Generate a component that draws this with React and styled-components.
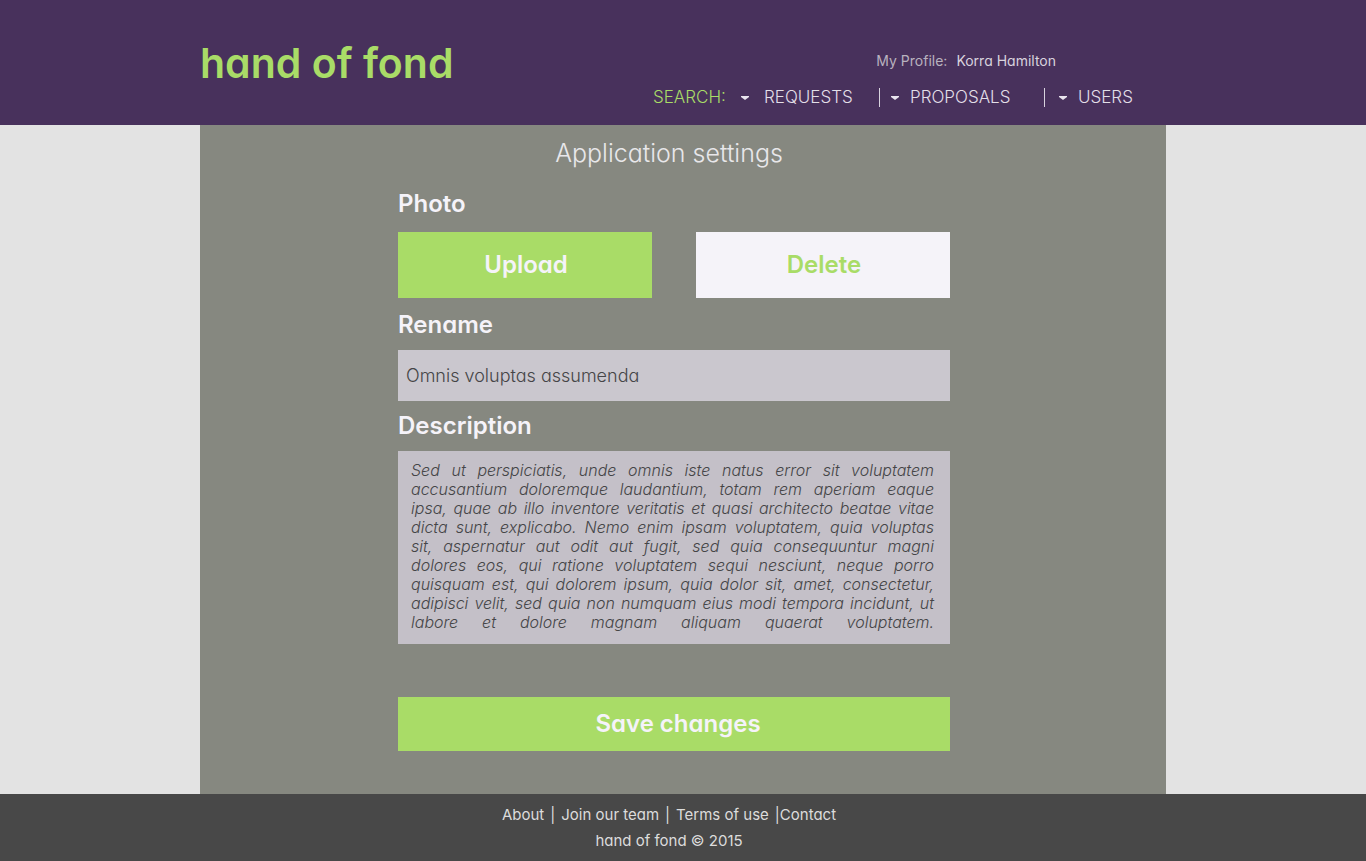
import React from "react";
import styled, { createGlobalStyle } from "styled-components";

const colors = {
  purple: "#48315c",
  green: "#a9dc67",
  panel: "#868880",
  page: "#e3e3e3",
  light: "#f5f3f9",
  ink: "#454547",
  footer: "#484848",
};

const GlobalStyle = createGlobalStyle`
  * { box-sizing: border-box; }
  body {
    margin: 0;
    background: ${colors.page};
    font-family: Inter, "Open Sans", sans-serif;
    font-feature-settings: "cv11" 1;
  }
  button, input, textarea { font: inherit; font-feature-settings: inherit; }
  a { color: inherit; text-decoration: none; }
`;

const Page = styled.div`
  min-height: 100vh;
  display: flex;
  flex-direction: column;
`;

const Header = styled.header`
  background: ${colors.purple};
`;

const HeaderInner = styled.div`
  max-width: 966px;
  min-height: 125px;
  margin: 0 auto;
  padding-right: 33px;
  display: flex;
  justify-content: space-between;
`;

const Logo = styled.a`
  padding-top: 39px;
  color: ${colors.green};
  font-size: 41px;
  line-height: 48px;
  font-weight: 600;
`;

const HeaderSide = styled.div`
  padding-top: 51px;
  display: flex;
  flex-direction: column;
  gap: 17px;
`;

const Profile = styled.div`
  display: flex;
  justify-content: flex-end;
  gap: 9px;
  padding-right: 77px;
  font-size: 14px;
  line-height: 20px;
  color: #d8d3de;
`;

const ProfileLabel = styled.span`
  color: #b9b2bf;
`;

const Nav = styled.nav`
  display: grid;
  grid-template-columns: 87px 139px 165px 89px;
  font-size: 17px;
  line-height: 19px;
  font-weight: 300;
  color: #e3dfe8;
`;

const NavTitle = styled.span`
  color: ${colors.green};
`;

const NavButton = styled.button`
  display: flex;
  align-items: center;
  gap: ${(p) => (p.$divided ? 11 : 15)}px;
  padding: 0 0 0 ${(p) => p.$inset}px;
  border: 0;
  border-left: ${(p) => (p.$divided ? "1px solid #d8d3de" : "0")};
  background: none;
  color: inherit;
  line-height: 19px;
  cursor: pointer;
`;

const CaretIcon = styled.svg`
  flex-shrink: 0;
`;

const Caret = () => (
  <CaretIcon width="8" height="4" viewBox="0 0 8 4" aria-hidden="true">
    <path d="M0 0h8v1L4 4 0 1z" fill="#e9e4ee" />
  </CaretIcon>
);

const Panel = styled.main`
  flex: 1;
  width: 100%;
  max-width: 966px;
  margin: 0 auto;
  padding: 13px 18px 43px 0;
  background: ${colors.panel};
`;

const Title = styled.h1`
  margin: 0 0 22px;
  padding-right: 10px;
  text-align: center;
  font-size: 25px;
  line-height: 30px;
  font-weight: 300;
  color: #e8e7ea;
`;

const Form = styled.form`
  max-width: 552px;
  margin: 0 auto;
  display: flex;
  flex-direction: column;
`;

const Group = styled.div`
  display: flex;
  flex-direction: column;
  gap: ${(p) => p.$gap}px;
  margin-bottom: ${(p) => p.$after}px;
`;

const Heading = styled.label`
  font-size: 24px;
  line-height: 28px;
  font-weight: 600;
  color: ${colors.light};
`;

const ButtonRow = styled.div`
  display: grid;
  grid-template-columns: 1fr 1fr;
  gap: 44px;
`;

const Button = styled.button`
  height: ${(p) => (p.$tall ? 66 : 54)}px;
  padding: 0 0 0 ${(p) => (p.$tall ? 2 : 8)}px;
  border: 0;
  background: ${(p) => (p.$light ? colors.light : colors.green)};
  color: ${(p) => (p.$light ? colors.green : colors.light)};
  font-size: 24px;
  line-height: 28px;
  font-weight: 600;
  cursor: pointer;
`;

const TextInput = styled.input`
  width: 100%;
  height: 51px;
  padding: 0 8px;
  border: 0;
  border-radius: 0;
  background: #cac7ce;
  color: ${colors.ink};
  font-size: 18px;
  font-weight: 300;
`;

const TextArea = styled.textarea`
  display: block;
  width: 100%;
  height: 193px;
  padding: 10px 16px 10px 13px;
  border: 0;
  border-radius: 0;
  resize: none;
  overflow: hidden;
  background: #c4c0c8;
  color: ${colors.ink};
  font-size: 16px;
  line-height: 19px;
  font-style: italic;
  font-weight: 300;
  text-align: justify;
  text-align-last: justify;
`;

const Footer = styled.footer`
  min-height: 67px;
  padding: 11px 28px 10px 0;
  display: flex;
  flex-direction: column;
  align-items: center;
  gap: 6px;
  background: ${colors.footer};
  color: #dcdcdc;
  font-size: 15px;
  line-height: 20px;
`;

const FooterLinks = styled.div`
  display: flex;
  gap: 6px;
`;

const description = [
  "Sed ut perspiciatis, unde omnis iste natus error sit voluptatem",
  "accusantium doloremque laudantium, totam rem aperiam eaque",
  "ipsa, quae ab illo inventore veritatis et quasi architecto beatae vitae",
  "dicta sunt, explicabo. Nemo enim ipsam voluptatem, quia voluptas",
  "sit, aspernatur aut odit aut fugit, sed quia consequuntur magni",
  "dolores eos, qui ratione voluptatem sequi nesciunt, neque porro",
  "quisquam est, qui dolorem ipsum, quia dolor sit, amet, consectetur,",
  "adipisci velit, sed quia non numquam eius modi tempora incidunt, ut",
  "labore et dolore magnam aliquam quaerat voluptatem.",
].join("\n");

export default function App() {
  return (
    <Page>
      <GlobalStyle />
      <Header>
        <HeaderInner>
          <Logo href="#">hand of fond</Logo>
          <HeaderSide>
            <Profile>
              <ProfileLabel>My Profile:</ProfileLabel>
              <a href="#profile">Korra Hamilton</a>
            </Profile>
            <Nav>
              <NavTitle>SEARCH:</NavTitle>
              <NavButton type="button" $inset={1}>
                <Caret />
                REQUESTS
              </NavButton>
              <NavButton type="button" $divided $inset={11}>
                <Caret />
                PROPOSALS
              </NavButton>
              <NavButton type="button" $divided $inset={14}>
                <Caret />
                USERS
              </NavButton>
            </Nav>
          </HeaderSide>
        </HeaderInner>
      </Header>
      <Panel>
        <Title>Application settings</Title>
        <Form onSubmit={(e) => e.preventDefault()}>
          <Group $gap={14} $after={13} role="group" aria-labelledby="photo-heading">
            <Heading as="span" id="photo-heading">Photo</Heading>
            <ButtonRow>
              <Button type="button" $tall>Upload</Button>
              <Button type="button" $tall $light>Delete</Button>
            </ButtonRow>
          </Group>
          <Group $gap={11} $after={11}>
            <Heading htmlFor="name">Rename</Heading>
            <TextInput id="name" defaultValue="Omnis voluptas assumenda" />
          </Group>
          <Group $gap={11} $after={53}>
            <Heading htmlFor="description">Description</Heading>
            <TextArea id="description" spellCheck={false} defaultValue={description} />
          </Group>
          <Button type="submit">Save changes</Button>
        </Form>
      </Panel>
      <Footer>
        <FooterLinks>
          <a href="#about">About</a>
          <span>|</span>
          <a href="#team">Join our team</a>
          <span>|</span>
          <a href="#terms">Terms of use</a>
          <span>
            |<a href="#contact">Contact</a>
          </span>
        </FooterLinks>
        <span>hand of fond © 2015</span>
      </Footer>
    </Page>
  );
}
